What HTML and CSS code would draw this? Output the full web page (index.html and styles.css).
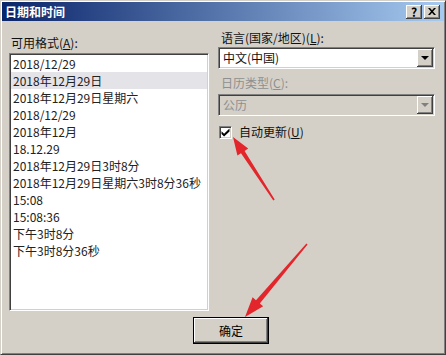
FILE: index.html
```html
<!DOCTYPE html>
<html lang="zh-CN">
<head>
  <meta charset="UTF-8">
  <title>日期和时间</title>
  <link rel="stylesheet" href="styles.css">
</head>
<body>
  <div class="window">
    <div class="titlebar">
      <span class="title">日期和时间</span>
      <div class="title-buttons">
        <span class="tbtn help">?</span>
        <span class="tbtn close">
          <svg width="8" height="7" viewBox="0 0 8 7">
            <path d="M0 0h2l2 2.3L6 0h2L5 3.5 8 7H6L4 4.7 2 7H0l3-3.5z" fill="#000"/>
          </svg>
        </span>
      </div>
    </div>

    <div class="dialog-body">
      <div class="left-col">
        <div class="label">可用格式(<u>A</u>):</div>
        <ul class="listbox">
          <li>2018/12/29</li>
          <li class="selected">2018年12月29日</li>
          <li>2018年12月29日星期六</li>
          <li>2018/12/29</li>
          <li>2018年12月</li>
          <li>18.12.29</li>
          <li>2018年12月29日3时8分</li>
          <li>2018年12月29日星期六3时8分36秒</li>
          <li>15:08</li>
          <li>15:08:36</li>
          <li>下午3时8分</li>
          <li>下午3时8分36秒</li>
        </ul>
      </div>

      <div class="right-col">
        <div class="label">语言(国家/地区)(<u>L</u>):</div>
        <div class="combo">
          <span class="combo-text">中文(中国)</span>
          <span class="combo-btn"><span class="tri"></span></span>
        </div>

        <div class="label disabled second">日历类型(<u>C</u>):</div>
        <div class="combo disabled">
          <span class="combo-text">公历</span>
          <span class="combo-btn"><span class="tri"></span></span>
        </div>

        <div class="check-row">
          <span class="checkbox">
            <svg width="9" height="9" viewBox="0 0 9 9">
              <path d="M0.5 3.3l2.6 2.5L8.5 0.5v3L3.1 8.6 0.5 6.1z" fill="#000"/>
            </svg>
          </span>
          <span class="check-label">自动更新(<u>U</u>)</span>
        </div>
      </div>
    </div>

    <div class="footer">
      <button class="ok-btn">确定</button>
    </div>

    <!-- annotation arrows drawn over the dialog -->
    <svg class="arrows" width="446" height="355" viewBox="0 0 446 355">
      <polygon fill="#e3262b" points="274.7,199.6 244.6,150.9 248.2,148.6 233,137 237.4,155.6 241.0,153.3 273.3,200.4"/>
      <polygon fill="#e3262b" points="307.6,244.5 259.8,303.4 263.2,306.3 245,317 252.6,297.3 256.0,300.2 306.4,243.5"/>
    </svg>
  </div>
</body>
</html>
```

FILE: styles.css
```css
body {
  margin: 0;
  padding: 0;
  background: #d4d0c8;
  font-family: "Noto Sans CJK SC", "Noto Sans", sans-serif;
  font-size: 12px;
  color: #111;
}

.window {
  position: relative;
  width: 446px;
  height: 355px;
  box-sizing: border-box;
  padding: 1px;
  background: #d4d0c8;
  border: 1px solid;
  border-color: #d4d0c8 #404040 #404040 #d4d0c8;
  box-shadow: inset 1px 1px #fff, inset -1px -1px #808080;
  overflow: hidden;
}

.titlebar {
  height: 19px;
  display: flex;
  align-items: center;
  justify-content: space-between;
  background: linear-gradient(to right, #0a246a, #a6caf0);
}

.title {
  color: #fff;
  font-weight: bold;
  line-height: 19px;
  padding-left: 3px;
}

.title-buttons {
  display: flex;
  gap: 2px;
  margin-right: 4px;
}

.tbtn {
  width: 16px;
  height: 14px;
  box-sizing: border-box;
  display: flex;
  align-items: center;
  justify-content: center;
  background: #d4d0c8;
  box-shadow: inset -1px -1px #404040, inset 1px 1px #fff, inset -2px -2px #808080;
  font-weight: bold;
  font-size: 12px;
  line-height: 14px;
  color: #000;
}

.dialog-body {
  display: flex;
  padding-left: 7px;
}

.left-col {
  width: 200px;
  padding-top: 14px;
  margin-right: 9px;
}

.right-col {
  width: 217px;
  padding-top: 9px;
}

.label {
  line-height: 16px;
  height: 16px;
  margin-left: 2px;
  margin-bottom: 2px;
}

.right-col .label {
  margin-left: 3px;
  margin-bottom: 1px;
}

.right-col .label.second {
  margin-top: 6px;
  margin-bottom: 3px;
}

.label.disabled,
.combo.disabled .combo-text {
  color: #8f8f8f;
}

.listbox {
  list-style: none;
  margin: 0;
  padding: 1px;
  height: 258px;
  box-sizing: border-box;
  background: #fff;
  border: 1px solid;
  border-color: #808080 #fff #fff #808080;
  box-shadow: inset 1px 1px #404040, inset -1px -1px #d4d0c8;
}

.listbox li {
  height: 17px;
  line-height: 17px;
  padding-left: 2px;
  white-space: nowrap;
  color: #222;
}

.listbox li.selected {
  background: #e4e3e8;
}

.combo {
  height: 22px;
  box-sizing: border-box;
  display: flex;
  align-items: center;
  justify-content: space-between;
  padding: 1px;
  background: #fff;
  border: 1px solid;
  border-color: #808080 #fff #fff #808080;
  box-shadow: inset 1px 1px #404040, inset -1px -1px #d4d0c8;
}

.combo.disabled {
  background: #d4d0c8;
}

.combo-text {
  padding-left: 3px;
  line-height: 18px;
}

.combo-btn {
  width: 16px;
  height: 18px;
  box-sizing: border-box;
  display: flex;
  align-items: center;
  justify-content: center;
  background: #d4d0c8;
  box-shadow: inset -1px -1px #404040, inset 1px 1px #fff, inset -2px -2px #808080;
}

.tri {
  width: 0;
  height: 0;
  border-left: 4px solid transparent;
  border-right: 4px solid transparent;
  border-top: 4px solid #000;
}

.combo.disabled .tri {
  border-top-color: #808080;
}

.check-row {
  display: flex;
  align-items: center;
  margin-top: 8px;
  margin-left: 1px;
}

.checkbox {
  width: 13px;
  height: 13px;
  box-sizing: border-box;
  display: flex;
  align-items: center;
  justify-content: center;
  background: #fff;
  border: 1px solid;
  border-color: #808080 #fff #fff #808080;
  box-shadow: inset 1px 1px #404040, inset -1px -1px #d4d0c8;
}

.check-label {
  margin-left: 7px;
  line-height: 16px;
}

.footer {
  display: flex;
  padding-left: 191px;
  margin-top: 6px;
}

.ok-btn {
  width: 76px;
  height: 27px;
  box-sizing: border-box;
  font-family: inherit;
  font-size: 12px;
  color: #000;
  background: #d4d0c8;
  border: 1px solid #000;
  box-shadow: inset -1px -1px #404040, inset 1px 1px #fff, inset -2px -2px #808080;
  padding: 0;
  line-height: 24px;
}

.arrows {
  position: absolute;
  left: -1px;
  top: -1px;
  pointer-events: none;
}
```
